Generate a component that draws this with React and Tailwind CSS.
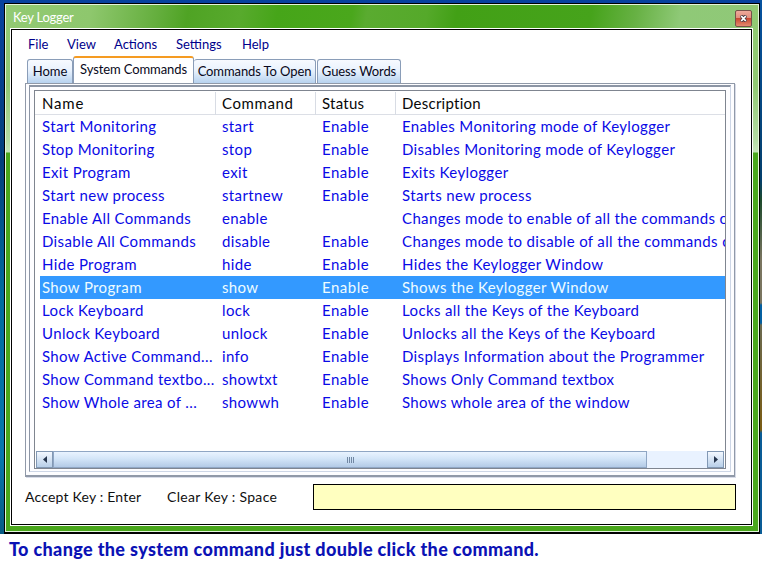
const rows = [
  ['Start Monitoring', 'start', 'Enable', 'Enables Monitoring mode of Keylogger'],
  ['Stop Monitoring', 'stop', 'Enable', 'Disables Monitoring mode of Keylogger'],
  ['Exit Program', 'exit', 'Enable', 'Exits Keylogger'],
  ['Start new process', 'startnew', 'Enable', 'Starts new process'],
  ['Enable All Commands', 'enable', '', 'Changes mode to enable of all the commands o'],
  ['Disable All Commands', 'disable', 'Enable', 'Changes mode to disable of all the commands o'],
  ['Hide Program', 'hide', 'Enable', 'Hides the Keylogger Window'],
  ['Show Program', 'show', 'Enable', 'Shows the Keylogger Window'],
  ['Lock Keyboard', 'lock', 'Enable', 'Locks all the Keys of the Keyboard'],
  ['Unlock Keyboard', 'unlock', 'Enable', 'Unlocks all the Keys of the Keyboard'],
  ['Show Active Command...', 'info', 'Enable', 'Displays Information about the Programmer'],
  ['Show Command textbo...', 'showtxt', 'Enable', 'Shows Only Command textbox'],
  ['Show Whole area of ...', 'showwh', 'Enable', 'Shows whole area of the window'],
];

function TitleBar() {
  return (
    <div className="flex h-[23px] shrink-0 items-start justify-between bg-[linear-gradient(100deg,#92ca73_0%,#8ec76d_11%,#64ae3d_20%,#4fa324_24%,#58aa2d_31%,#46a519_36%,#4aa71c_46%,#5aab30_48%,#55a92a_56%,#42a016_60%,#46a31b_78%,#67b144_84%,#8fc977_90%,#90c878_100%)] pl-[3px] pr-px">
      <span className="mt-[3px] text-[13px] leading-[18px] tracking-[-0.25px] text-white">Key Logger</span>
      <button className="mt-[5px] flex h-[17px] w-[17px] items-center justify-center rounded-[2px] border border-[#765249] bg-[linear-gradient(#efa99a_0%,#e08d7c_48%,#c94832_50%,#e28a70_100%)]">
        <svg width="7" height="7" viewBox="0 0 7 7">
          <path d="M1 .5l5 6M6 .5L1 6.5" stroke="#4d3b40" strokeWidth="3.4" />
          <path d="M1.2 1l4.6 5M5.8 1L1.2 6" stroke="#fff" strokeWidth="1.8" />
        </svg>
      </button>
    </div>
  );
}

function Menu() {
  return (
    <div className="flex h-[26px] shrink-0 items-center pl-4 pt-[3px] text-[13px] text-[#00008b]">
      <span className="w-[39px]">File</span>
      <span className="w-[47px]">View</span>
      <span className="w-[62px]">Actions</span>
      <span className="w-[66px]">Settings</span>
      <span>Help</span>
    </div>
  );
}

const tabBase =
  'flex h-6 items-center justify-center rounded-t-[3px] border border-b-0 border-[#8a9db8] bg-[linear-gradient(#f7faff_0%,#e9f2fd_45%,#b7d2ef_100%)] pt-px';

function Tabs() {
  return (
    <div className="flex h-[27px] shrink-0 items-end whitespace-nowrap pl-[15px] text-[13px] text-[#080820]">
      <div className={tabBase + ' w-[46px]'}>Home</div>
      <div className="flex h-[27px] w-[121px] items-center justify-center rounded-t-[3px] border border-b-0 border-t-2 border-[#8a9db8] border-t-[#f59b22] bg-white">
        <span className="-mt-px tracking-[-0.1px]">System Commands</span>
      </div>
      <div className={tabBase + ' w-[122px] border-l-0 tracking-[-0.1px]'}>Commands To Open</div>
      <div className={tabBase + ' ml-px w-[84px] tracking-[-0.1px]'}>Guess Words</div>
    </div>
  );
}

function ScrollBar() {
  return (
    <div className="mx-px flex h-[17px] shrink-0 bg-[#e9f2ff]">
      <div className="flex w-[17px] items-center justify-center border border-[#8298b4] bg-[linear-gradient(#f3f8ff,#b8cfe9)]">
        <svg width="4" height="7" viewBox="0 0 4 7"><path d="M4 0v7L0 3.5z" fill="#26354d" /></svg>
      </div>
      <div className="flex w-[594px] items-center justify-center gap-px border border-[#8fa6c4] bg-[linear-gradient(#e9f3ff_0%,#d3e5f8_45%,#b3cae6_100%)]">
        {[0, 1, 2, 3].map((i) => (
          <i key={i} className="h-[6px] w-px bg-[#7187a3]" />
        ))}
      </div>
      <div className="ml-auto flex w-[17px] items-center justify-center border border-[#8298b4] bg-[linear-gradient(#f3f8ff,#b8cfe9)]">
        <svg width="4" height="7" viewBox="0 0 4 7"><path d="M0 0v7l4-3.5z" fill="#26354d" /></svg>
      </div>
    </div>
  );
}

function CommandList() {
  return (
    <div className="flex flex-1 flex-col overflow-hidden border border-[#7f8590] bg-white text-[15px] tracking-[0.36px]">
      <div className="flex h-6 shrink-0 items-center border-b border-[#dcdfe6] pl-[7px] pt-[2px] text-[#080808]">
        <span className="w-[174px] border-r border-[#d8dce4] tracking-[0.8px]">Name</span>
        <span className="w-[100px] border-r border-[#d8dce4] pl-[6px] tracking-[0.6px]">Command</span>
        <span className="w-20 border-r border-[#d8dce4] pl-[6px] tracking-[0.25px]">Status</span>
        <span className="pl-[6px] tracking-[0.25px]">Description</span>
      </div>
      <div className="flex-1 pl-[5px]">
        {rows.map((r) => (
          <div
            key={r[1]}
            className={
              'flex h-[23px] items-center overflow-hidden whitespace-nowrap pl-[2px] ' +
              (r[1] === 'show' ? 'bg-[#3399ff] text-[#eefcff]' : 'text-[#0a0ae6]')
            }
          >
            <span className="w-[180px] shrink-0">{r[0]}</span>
            <span className="w-[100px] shrink-0">{r[1]}</span>
            <span className="w-20 shrink-0 tracking-[0.5px]">{r[2]}</span>
            <span className="flex-1 overflow-hidden">{r[3]}</span>
          </div>
        ))}
      </div>
      <ScrollBar />
    </div>
  );
}

export default function App() {
  return (
    <div className="h-[567px] w-[762px] overflow-hidden bg-white font-['Lato','Liberation_Sans',sans-serif]">
      <div className="h-[534px] bg-[linear-gradient(#07529f_0px,#043f6c_180px,#1d4a2c_200px,#7a7560_260px,#7a7560_303px,#0560a0_305px,#0560a0_323px,#6b6a50_325px,#7a5c14_430px,#0a5c96_433px,#0a5c96_534px),linear-gradient(#07429f_0%,#043f7c_30%,#006b9f_55%,#0878ae_85%,#075b84_100%)] bg-[length:2px_100%,100%_100%] bg-[position:100%_0,0_0] bg-no-repeat pl-1 pr-[2px] pt-[3px]">
        <div className="flex h-[531px] flex-col border border-b-2 border-black">
          <div className="flex min-h-0 flex-1 flex-col border border-[#e4f5dc] bg-[linear-gradient(#92ca73_0px,#90c873_80px,#b4dba3_135px,#c5e3b8_147px,#4aa71c_148px,#4aa71c_100%)] pb-[5px] pl-1 pr-[5px]">
            <TitleBar />
            <div className="flex min-h-0 flex-1 flex-col border border-white">
              <div className="flex min-h-0 flex-1 flex-col border border-black bg-white">
                <Menu />
                <Tabs />
                <div className="ml-[13px] flex h-[394px] w-[710px] shrink-0 flex-col border border-b-2 border-[#9099a8] bg-[#fdfdff] p-[3px] pt-px shadow-[1px_1px_0_#d8dce8]">
                  <div className="flex min-h-0 flex-1 flex-col border border-[#cdd6e6] border-l-[#8c95a4] border-t-2 border-t-[#8c95a4] p-1 pb-[2px] pt-[3px]">
                    <CommandList />
                  </div>
                </div>
                <div className="mt-[7px] flex items-center pl-[13px] text-sm text-[#101010]">
                  <span className="w-[142px] tracking-[0.2px]">Accept Key : Enter</span>
                  <span className="w-[146px] tracking-[0.3px]">Clear Key : Space</span>
                  <div className="h-[26px] w-[423px] border border-black bg-[#ffffc0]" />
                </div>
              </div>
            </div>
          </div>
        </div>
      </div>
      <div className="pl-[9px] pt-[5px] text-[18px] font-black leading-[21px] tracking-[0.36px] text-[#0b12b5]">
        To change the system command just double click the command.
      </div>
    </div>
  );
}
